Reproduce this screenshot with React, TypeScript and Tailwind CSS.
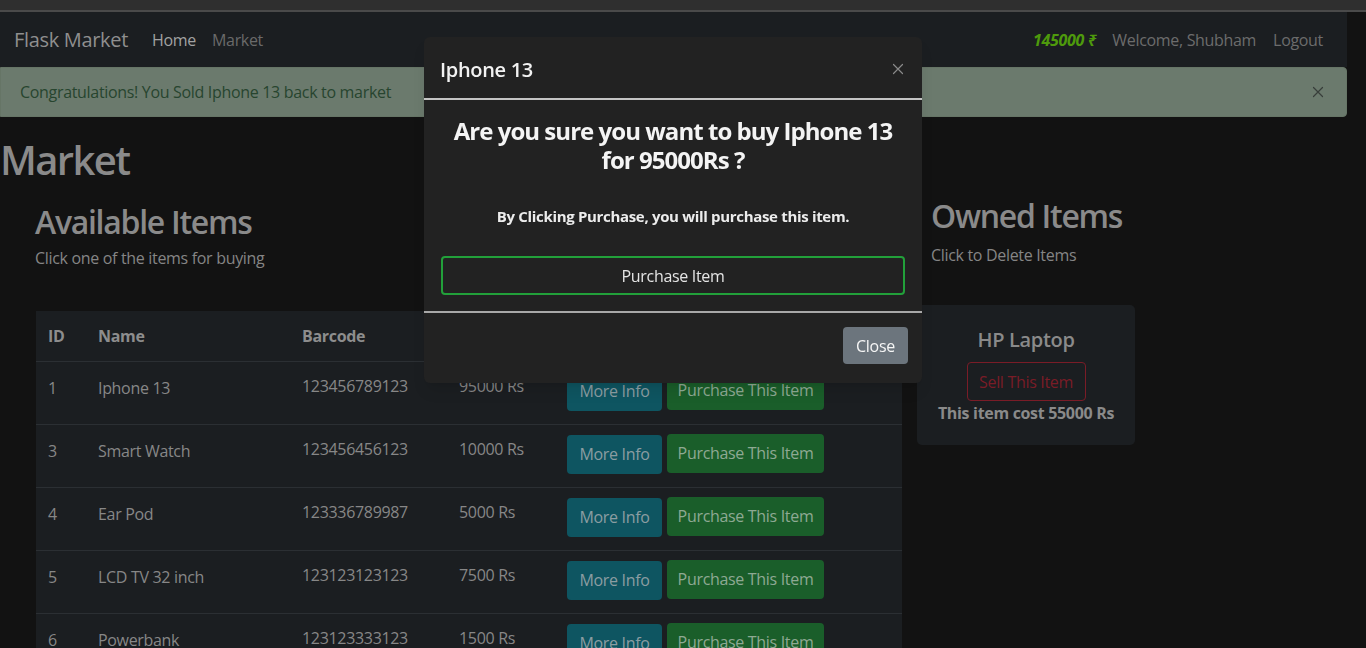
import React from 'react';

const items = [
  { id: 1, name: 'Iphone 13', barcode: '123456789123', price: '95000 Rs' },
  { id: 3, name: 'Smart Watch', barcode: '123456456123', price: '10000 Rs' },
  { id: 4, name: 'Ear Pod', barcode: '123336789987', price: '5000 Rs' },
  { id: 5, name: 'LCD TV 32 inch', barcode: '123123123123', price: '7500 Rs' },
  { id: 6, name: 'Powerbank', barcode: '123123333123', price: '1500 Rs' },
];

const CloseX = ({ className, stroke }: { className: string; stroke: string }) => (
  <svg viewBox="0 0 16 16" className={className} fill="none">
    <path d="M2 2 L14 14 M14 2 L2 14" stroke={stroke} strokeWidth="1.6" strokeLinecap="round" />
  </svg>
);

const App = () => {
  return (
    <div className="h-[648px] overflow-hidden bg-[#121212] font-['Open_Sans','Noto_Sans',sans-serif] text-[16px] tracking-[-0.02em]">
      {/* browser strip */}
      <div className="h-[12px] bg-[#2f2f2f] border-b-2 border-[#4a4a4a]" />

      <div className="flex">
        <div className="w-[1347px]">
          {/* navbar */}
          <nav className="h-[55px] bg-[#1b1e21] flex items-center pt-[1px] pl-[14px] pr-[16px]">
            <span className="text-[20px] text-[#8f8f8f] mr-[24px]">Flask Market</span>
            <a className="text-[#a2a2a2] mr-[16px]">Home</a>
            <a className="text-[#6a6a6a]">Market</a>
            <div className="ml-auto flex items-center">
              <span className="font-bold italic text-[#4e9a0c] mr-[16px]">145000 ₹</span>
              <a className="text-[#6c6c6c] mr-[17px]">Welcome, Shubham</a>
              <a className="text-[#6c6c6c] mr-[8px]">Logout</a>
            </div>
          </nav>

          {/* alert */}
          <div className="h-[50px] bg-[#6b7a6d] border border-[#667566] rounded-r-[4px] flex items-center pl-[19px] pr-[22px]">
            <span className="text-[#27452f]">Congratulations! You Sold Iphone 13 back to market</span>
            <CloseX className="ml-auto w-[12px] h-[12px]" stroke="#383e3a" />
          </div>

          {/* main */}
          <h1 className="mt-[19px] text-[40px] leading-[48px] font-semibold tracking-[-0.04em] text-[#8a8a8a]">Market</h1>

          <div className="flex mt-[15px]">
            <div className="w-[867px] ml-[35px]">
              <h2 className="mt-[4px] text-[32px] leading-[38px] font-semibold tracking-[-0.04em] text-[#8a8a8a]">Available Items</h2>
              <p className="mt-[5px] leading-[24px] text-[#858585]">Click one of the items for buying</p>

              <table className="mt-[41px] w-[866px] ml-[1px] bg-[#1b1e21] text-left border-collapse">
                <thead>
                  <tr className="h-[50px] border-b border-[#2b2f33]">
                    <th className="w-[50px] pl-[12px] font-bold text-[#8d8d8d]">ID</th>
                    <th className="w-[204px] pl-[12px] font-bold text-[#8d8d8d]">Name</th>
                    <th className="w-[157px] pl-[12px] font-bold text-[#8d8d8d]">Barcode</th>
                    <th className="w-[108px] pl-[12px] font-bold text-[#8d8d8d]">Price</th>
                    <th className="pl-[12px] font-bold text-[#8d8d8d]">Options</th>
                  </tr>
                </thead>
                <tbody>
                  {items.map((item) => (
                    <tr key={item.id} className="border-b border-[#2b2f33]">
                      <td className="pl-[12px] pt-[14px] align-top text-[#878787]">{item.id}</td>
                      <td className="pl-[12px] pt-[14px] align-top text-[#878787]">{item.name}</td>
                      <td className="pl-[12px] pt-[12px] align-top text-[#878787]">{item.barcode}</td>
                      <td className="pl-[12px] pt-[12px] align-top text-[#878787]">{item.price}</td>
                      <td className="pl-[12px] pt-[10px] pb-[13px] align-top">
                        <div className="flex gap-[5px]">
                          <button className="h-[39px] w-[95px] rounded-[4px] bg-[#0e5561] text-[#8b9da1]">More Info</button>
                          <button className="h-[39px] w-[157px] rounded-[4px] bg-[#1a5e2a] text-[#8ea993] -mt-[1px]">Purchase This Item</button>
                        </div>
                      </td>
                    </tr>
                  ))}
                </tbody>
              </table>
            </div>

            <div className="ml-[15px] -mt-[2px]">
              <h2 className="ml-[14px] text-[32px] leading-[38px] font-semibold tracking-[-0.04em] text-[#8a8a8a]">Owned Items</h2>
              <p className="ml-[14px] mt-[8px] leading-[24px] text-[#858585]">Click to Delete Items</p>
              <div className="mt-[38px] w-[218px] h-[140px] rounded-[5px] bg-[#1b1e21] pt-[23px] flex flex-col items-center">
                <h5 className="text-[20px] leading-[24px] font-semibold text-[#8a8a8a]">HP Laptop</h5>
                <button className="mt-[10px] h-[39px] w-[119px] rounded-[4px] border border-[#7a1c27] text-[#7a1c27]">Sell This Item</button>
                <p className="leading-[24px] font-bold text-[#8a8a8a]">This item cost 55000 Rs</p>
              </div>
            </div>
          </div>
        </div>
        {/* scrollbar area */}
        <div className="w-[19px] bg-[#121212]" />
      </div>

      {/* modal */}
      <div className="fixed left-[424px] top-[37px] w-[498px] rounded-[6px] bg-[#222222] shadow-lg">
        <div className="flex items-start pl-[16px] pr-[18px] pt-[18px] pb-[13px] border-b-2 border-[#c4c4c4]">
          <h5 className="text-[20px] leading-[30px] font-semibold text-[#f2f2f2]">Iphone 13</h5>
          <CloseX className="ml-auto mt-[8px] w-[12px] h-[12px]" stroke="#8a8a8a" />
        </div>
        <div className="px-[17px] pt-[16px] pb-[16px] text-center">
          <h3 className="text-[24px] leading-[29px] font-bold tracking-[-0.04em] text-[#f4f4f4]">
            Are you sure you want to buy Iphone 13 for 95000Rs ?
          </h3>
          <p className="mt-[30px] leading-[24px] font-bold text-[15px] text-[#ececec]">
            By Clicking Purchase, you will purchase this item.
          </p>
          <button className="mt-[28px] w-full h-[39px] rounded-[4px] border-2 border-[#22a03a] text-[#e4e4e4]">Purchase Item</button>
        </div>
        <div className="flex justify-end border-t-2 border-[#a8a8a8] pt-[14px] pb-[19px] pr-[14px]">
          <button className="h-[37px] w-[65px] rounded-[4px] bg-[#6c757d] text-[#f5f5f5]">Close</button>
        </div>
      </div>
    </div>
  );
};

export default App;
